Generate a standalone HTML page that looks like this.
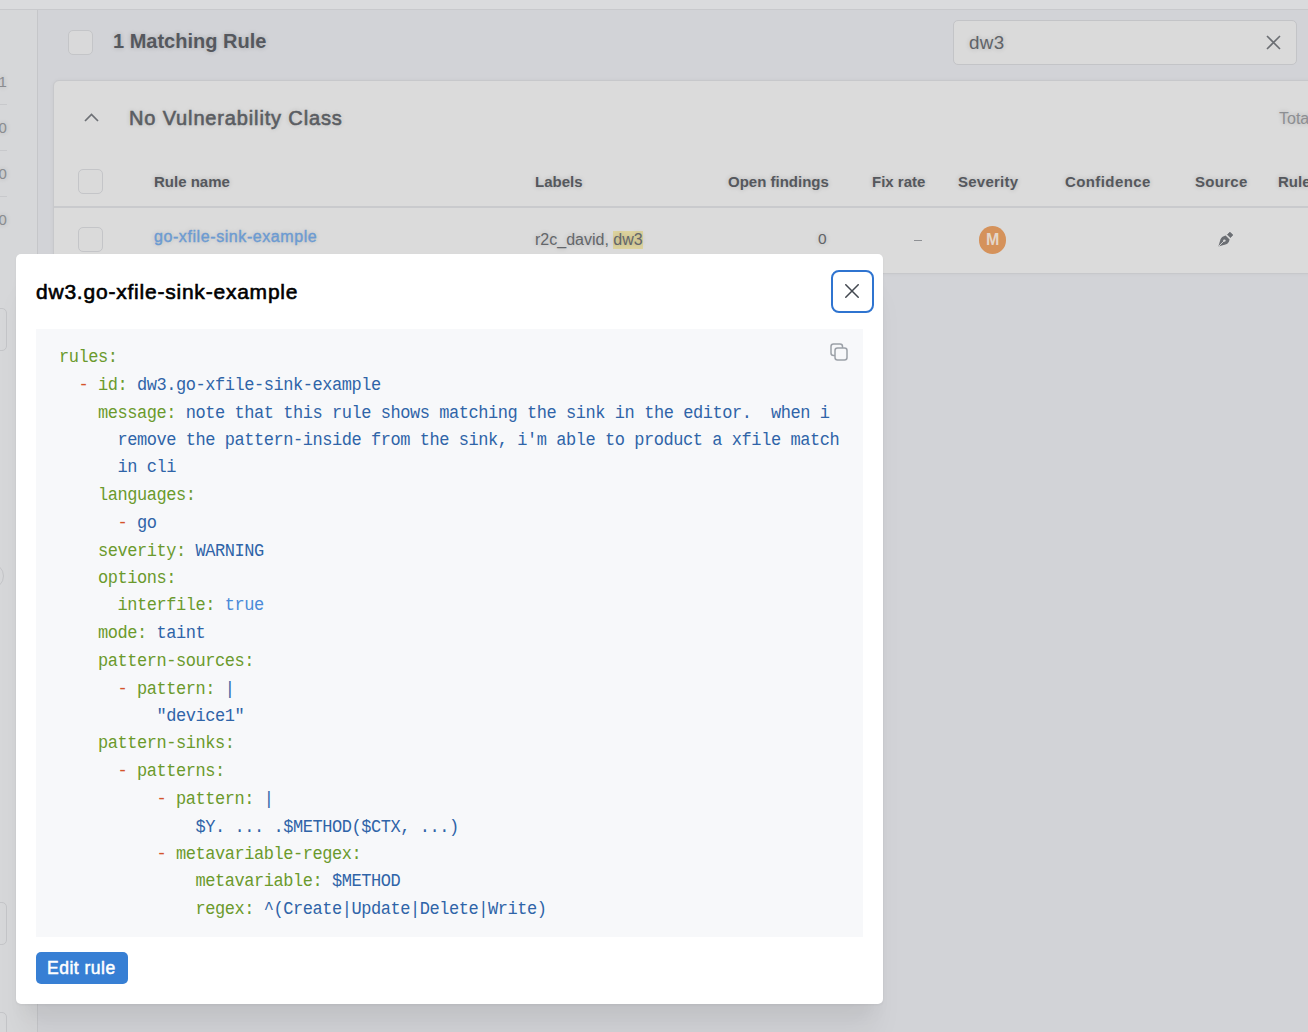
<!DOCTYPE html>
<html><head><meta charset="utf-8">
<style>
*{box-sizing:border-box;margin:0;padding:0}
html,body{width:1308px;height:1032px;overflow:hidden;background:#d2d3d7;font-family:"Liberation Sans",sans-serif}
#bg{position:absolute;left:0;top:0;width:1308px;height:1032px;overflow:hidden}
#blur{position:absolute;left:-20px;top:-20px;width:1348px;height:1072px;}
#pg{position:absolute;left:20px;top:20px;width:1308px;height:1032px}
.a{position:absolute}
.t{position:absolute;white-space:nowrap;line-height:1;text-shadow:0 0 5px rgba(0,0,0,.2)}
.cb{position:absolute;width:25px;height:25px;border:1px solid #c4c5c8;border-radius:5px;background:#dadada}

#modal{position:absolute;left:16px;top:254px;width:867px;height:750px;background:#fff;border-radius:5px;box-shadow:0 1px 3px rgba(0,0,0,.05),rgba(0,0,0,.05) 0 36px 28px -7px,rgba(0,0,0,.04) 0 17px 17px -7px}
#modal .title{position:absolute;left:20px;top:26.5px;font-size:21px;-webkit-text-stroke:0.6px #000;letter-spacing:0.78px;color:#000;white-space:nowrap;line-height:1}
#modal .close{position:absolute;left:815px;top:16px;width:42.5px;height:42.5px;border:2px solid #2f74d0;border-radius:8px}
#modal .close svg{position:absolute;left:12px;top:12px}
#modal .code{position:absolute;left:20px;top:75px;width:827px;height:608px;background:#f7f8fa}
#modal .copy{position:absolute;left:794px;top:14px}
#modal pre{position:absolute;left:23px;top:15.1px;font-family:"Liberation Mono",monospace;font-size:17px;letter-spacing:-0.45px;line-height:25.794px;transform:scaleY(1.07);transform-origin:0 0;color:#2f64a8}
.k{color:#6b9a2c}.v{color:#2f64a8}.d{color:#d4542b}.b{color:#4a8ad8}
#modal .btn{position:absolute;left:20px;top:698px;width:92px;height:32px;background:#377fd4;border-radius:5px;color:#fff;font-size:17.5px;-webkit-text-stroke:0.5px #fff;letter-spacing:0.5px;line-height:33px;padding-left:11px;white-space:nowrap}
</style></head><body>
<div id="bg"><div id="blur"><div id="pg">
  <!-- top strip -->
  <div class="a" style="left:-20px;top:-20px;width:1348px;height:29px;background:#dadbdd"></div>
  <div class="a" style="left:-20px;top:9px;width:1348px;height:1px;background:#c8c9cc"></div>
  <!-- sidebar -->
  <div class="a" style="left:-20px;top:10px;width:57px;height:1050px;background:#d6d7d9"></div>
  <div class="a" style="left:37px;top:10px;width:1px;height:1050px;background:#c5c6c9"></div>
  <div class="t" style="left:-1.5px;top:74px;font-size:15px;color:#8a8c90">1</div>
  <div class="a" style="left:-20px;top:104px;width:27px;height:1px;background:#c8c9cc"></div>
  <div class="t" style="left:-1.5px;top:120px;font-size:15px;color:#8a8c90">0</div>
  <div class="a" style="left:-20px;top:150px;width:27px;height:1px;background:#c8c9cc"></div>
  <div class="t" style="left:-1.5px;top:166px;font-size:15px;color:#8a8c90">0</div>
  <div class="a" style="left:-20px;top:196px;width:27px;height:1px;background:#c8c9cc"></div>
  <div class="t" style="left:-1.5px;top:212px;font-size:15px;color:#8a8c90">0</div>
  <div class="a" style="left:-30px;top:308px;width:37px;height:43px;border:1px solid #c4c5c8;border-radius:5px"></div>
  <div class="a" style="left:-30px;top:563px;width:34px;height:26px;border:1px solid #c4c5c8;border-radius:13px"></div>
  <div class="a" style="left:-30px;top:902px;width:37px;height:43px;border:1px solid #c4c5c8;border-radius:5px"></div>
  <div class="a" style="left:-30px;top:1012px;width:37px;height:43px;border:1px solid #c4c5c8;border-radius:5px"></div>
  <!-- main -->
  <div class="a" style="left:38px;top:10px;width:1300px;height:1050px;background:#d2d3d7"></div>
  <div class="cb" style="left:68px;top:30px;background:#d9d9da"></div>
  <div class="t" style="left:113px;top:31px;font-size:20px;font-weight:bold;color:#55585e">1 Matching Rule</div>
  <!-- search -->
  <div class="a" style="left:953px;top:20px;width:344px;height:45px;border:1px solid #c3c4c7;border-radius:5px;background:#dadada"></div>
  <div class="t" style="left:969px;top:33.5px;font-size:18.8px;letter-spacing:0.4px;color:#606368">dw3</div>
  <svg class="a" style="left:1266px;top:35px" width="15" height="15" viewBox="0 0 15 15"><path d="M1 1L14 14M14 1L1 14" stroke="#6b6e73" stroke-width="1.6"/></svg>
  <!-- card -->
  <div class="a" style="left:53px;top:80px;width:1300px;height:194px;border:1px solid #c7c8cb;border-radius:6px;background:#dbdbdb;box-shadow:0 0 4px rgba(0,0,0,.04)"></div>
  <svg class="a" style="left:84px;top:112px" width="15" height="10" viewBox="0 0 15 10"><path d="M1 9L7.5 2.5L14 9" stroke="#6d7075" stroke-width="1.7" fill="none"/></svg>
  <div class="t" style="left:129px;top:108px;font-size:20px;-webkit-text-stroke:0.6px #5a5d62;letter-spacing:0.85px;color:#5a5d62">No Vulnerability Class</div>
  <div class="t" style="left:1279px;top:111px;font-size:16px;color:#8c8e92">Total</div>
  <!-- table header -->
  <div class="cb" style="left:78px;top:169px"></div>
  <div class="t" style="left:154px;top:174px;font-size:15px;font-weight:bold;color:#55585d">Rule name</div>
  <div class="t" style="left:535px;top:174px;font-size:15px;font-weight:bold;color:#55585d">Labels</div>
  <div class="t" style="left:728px;top:174px;font-size:15px;font-weight:bold;color:#55585d">Open findings</div>
  <div class="t" style="left:872px;top:174px;font-size:15px;font-weight:bold;color:#55585d">Fix rate</div>
  <div class="t" style="left:958px;top:174px;font-size:15px;font-weight:bold;letter-spacing:0.25px;color:#55585d">Severity</div>
  <div class="t" style="left:1065px;top:174px;font-size:15px;font-weight:bold;letter-spacing:0.4px;color:#55585d">Confidence</div>
  <div class="t" style="left:1195px;top:174px;font-size:15px;font-weight:bold;letter-spacing:0.3px;color:#55585d">Source</div>
  <div class="t" style="left:1278px;top:174px;font-size:15px;font-weight:bold;color:#55585d">Rule</div>
  <div class="a" style="left:54px;top:206px;width:1300px;height:2px;background:#c9cacd"></div>
  <!-- row -->
  <div class="cb" style="left:78px;top:227px"></div>
  <div class="t" style="left:154px;top:229px;font-size:16px;-webkit-text-stroke:0.4px #6c9bd2;letter-spacing:0.58px;color:#6c9bd2">go-xfile-sink-example</div>
  <div class="t" style="left:535px;top:232px;font-size:16px;color:#63666a">r2c_david, <span style="background:#ddd39e;padding:0 0 1px">dw3</span></div>
  <div class="t" style="left:818px;top:231px;font-size:15.5px;color:#606367">0</div>
  <div class="a" style="left:914px;top:240px;width:8px;height:1px;background:#8e9094"></div>
  <div class="a" style="left:979px;top:226px;width:27px;height:28px;border-radius:14px;background:#d5925b"></div>
  <div class="t" style="left:986px;top:232px;font-size:16px;font-weight:bold;color:#e4d6c9;text-shadow:none">M</div>
  <svg class="a" style="left:1218px;top:232px" width="15" height="15" viewBox="0 0 15 15"><path d="M0.4 14.6L2.4 7.6Q3.4 4.4 7.6 3.4L11.6 7.4Q10.6 11.6 7.4 12.6Z" fill="#6b6e73"/><path d="M0.6 14.4L6.2 8.8" stroke="#dbdbdb" stroke-width="0.9"/><circle cx="6.4" cy="8.6" r="1.2" fill="#dbdbdb"/><path d="M12 0.2L14.8 3L12.4 5.6L9.4 2.6Z" fill="#6b6e73" stroke="#6b6e73" stroke-width="0.8" stroke-linejoin="round"/></svg>
</div></div></div>

<div id="modal">
  <div class="title">dw3.go-xfile-sink-example</div>
  <div class="close"><svg width="14" height="14" viewBox="0 0 14 14"><path d="M0.3 0.3L13.7 13.7M13.7 0.3L0.3 13.7" stroke="#434850" stroke-width="1.5"/></svg></div>
  <div class="code">
    <svg class="copy" width="18" height="18" viewBox="0 0 18 18"><rect x="1" y="1" width="11.5" height="11.5" rx="2.5" fill="none" stroke="#9ca1a8" stroke-width="1.5"/><rect x="5" y="5" width="12" height="12" rx="2.5" fill="#f7f8fa" stroke="#9ca1a8" stroke-width="1.5"/></svg>
<pre><span class="k">rules:</span>
  <span class="d">-</span> <span class="k">id:</span> <span class="v">dw3.go-xfile-sink-example</span>
    <span class="k">message:</span> <span class="v">note that this rule shows matching the sink in the editor.  when i</span>
      <span class="v">remove the pattern-inside from the sink, i'm able to product a xfile match</span>
      <span class="v">in cli</span>
    <span class="k">languages:</span>
      <span class="d">-</span> <span class="v">go</span>
    <span class="k">severity:</span> <span class="v">WARNING</span>
    <span class="k">options:</span>
      <span class="k">interfile:</span> <span class="b">true</span>
    <span class="k">mode:</span> <span class="v">taint</span>
    <span class="k">pattern-sources:</span>
      <span class="d">-</span> <span class="k">pattern:</span> <span class="v">|</span>
          <span class="v">"device1"</span>
    <span class="k">pattern-sinks:</span>
      <span class="d">-</span> <span class="k">patterns:</span>
          <span class="d">-</span> <span class="k">pattern:</span> <span class="v">|</span>
              <span class="v">$Y. ... .$METHOD($CTX, ...)</span>
          <span class="d">-</span> <span class="k">metavariable-regex:</span>
              <span class="k">metavariable:</span> <span class="v">$METHOD</span>
              <span class="k">regex:</span> <span class="v">^(Create|Update|Delete|Write)</span></pre>
  </div>
  <div class="btn">Edit rule</div>
</div>
</body></html>
